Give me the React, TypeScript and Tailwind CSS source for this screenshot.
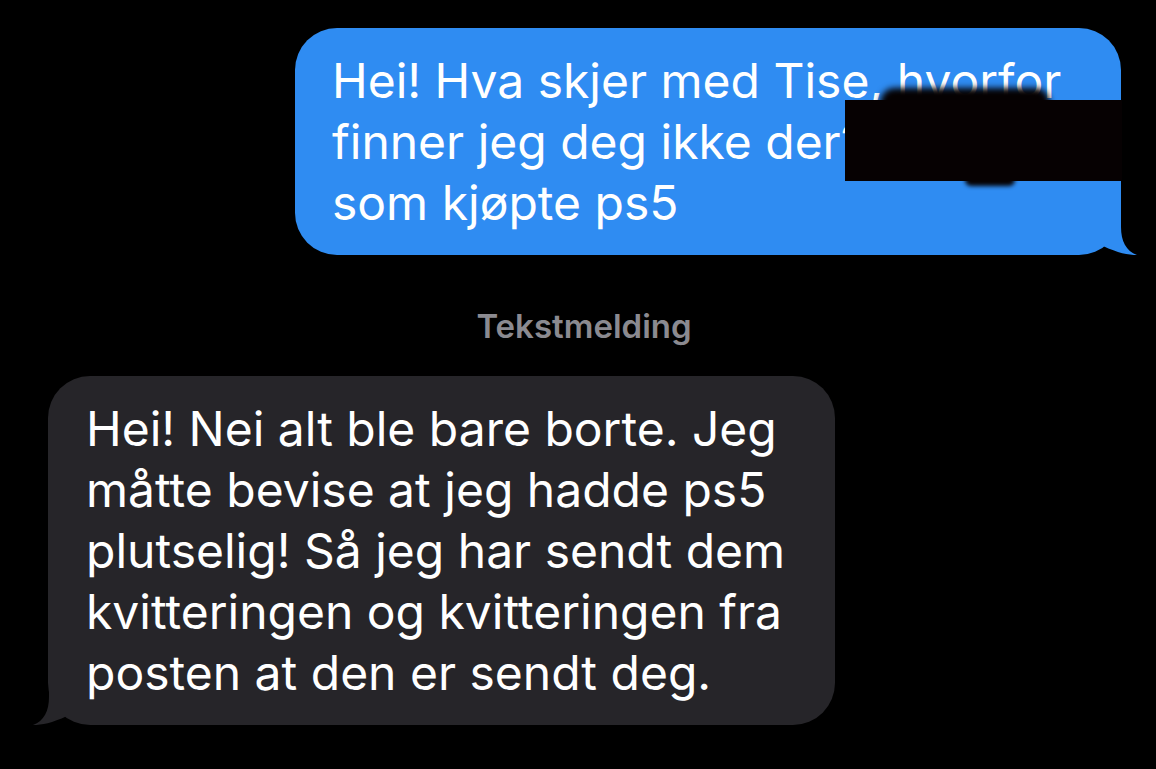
import React from "react";

const font = { fontFamily: "Inter, 'Open Sans', 'Liberation Sans', sans-serif" };

function TailRight({ color }: { color: string }) {
  return (
    <svg className="absolute bottom-0 right-[-17px]" width="40" height="42" viewBox="0 0 40 42">
      <path d="M23 0 L23 14 C23 28 28 38 39 42 C30 42 20 40 5 33 L5 0 Z" fill={color} />
    </svg>
  );
}

function TailLeft({ color }: { color: string }) {
  return (
    <svg className="absolute bottom-0 left-[-16px]" width="40" height="42" viewBox="0 0 40 42">
      <path d="M17 0 L17 14 C17 28 12 38 1 42 C10 42 20 40 35 33 L35 0 Z" fill={color} />
    </svg>
  );
}

export default function App() {
  return (
    <div className="flex h-[769px] w-[1156px] flex-col overflow-hidden bg-black" style={font}>
      <div className="flex justify-end pr-[35px] pt-[28px]">
        <div className="relative w-[826px] rounded-[42px] bg-[#2f8cf2] pb-[22px] pl-[37px] pr-[30px] pt-[22px] text-[48px] leading-[61px] text-white">
          <TailRight color="#2f8cf2" />
          <p className="relative whitespace-nowrap">
            Hei! Hva skjer med Tise, hvorfor
            <br />
            finner jeg deg ikke der?
            <br />
            som kjøpte ps5
          </p>
          <div className="absolute left-[585px] top-[60px] h-[30px] w-[170px] rounded-full bg-[#050102] blur-[3px]" />
          <div className="absolute left-[670px] top-[146px] h-[12px] w-[50px] rounded-full bg-[#050102] blur-[2px]" />
          <div className="absolute left-[550px] top-[72px] h-[81px] w-[277px] bg-[#060102]" />
        </div>
      </div>

      <div className="mt-[52px] pl-[12px] text-center text-[33px] font-semibold leading-[38px] text-[#8b8a90]">
        Tekstmelding
      </div>

      <div className="mt-[31px] flex pl-[48px]">
        <div className="relative w-[787px] rounded-[42px] bg-[#262529] pb-[22px] pl-[38px] pr-[30px] pt-[22px] text-[48px] leading-[61px] text-white">
          <TailLeft color="#262529" />
          <p className="relative whitespace-nowrap">
            Hei! Nei alt ble bare borte. Jeg
            <br />
            måtte bevise at jeg hadde ps5
            <br />
            plutselig! Så jeg har sendt dem
            <br />
            kvitteringen og kvitteringen fra
            <br />
            posten at den er sendt deg.
          </p>
        </div>
      </div>
    </div>
  );
}
